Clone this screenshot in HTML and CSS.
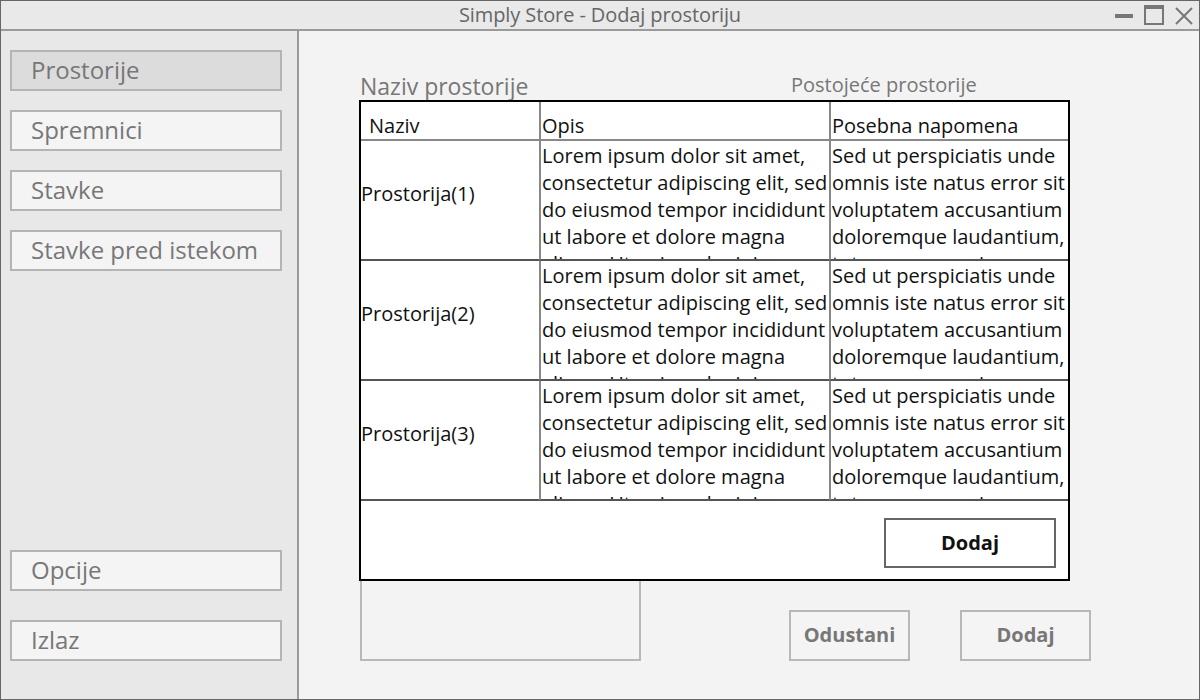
FILE: index.html
```html
<!DOCTYPE html>
<html lang="hr">
<head>
<meta charset="utf-8">
<title>Simply Store - Dodaj prostoriju</title>
<link rel="stylesheet" href="styles.css">
</head>
<body>
<div class="window">
  <header class="titlebar">
    <span class="title">Simply Store - Dodaj prostoriju</span>
    <div class="controls">
      <span class="ctl-min"></span>
      <span class="ctl-max"></span>
      <svg class="ctl-close" width="18" height="18" viewBox="0 0 18 18"><path d="M1 1 L17 17 M17 1 L1 17" stroke="#777" stroke-width="2" fill="none"/></svg>
    </div>
  </header>
  <div class="body">
    <aside class="sidebar">
      <nav class="nav-top">
        <button class="nav-btn active">Prostorije</button>
        <button class="nav-btn">Spremnici</button>
        <button class="nav-btn">Stavke</button>
        <button class="nav-btn">Stavke pred istekom</button>
      </nav>
      <nav class="nav-bottom">
        <button class="nav-btn">Opcije</button>
        <button class="nav-btn">Izlaz</button>
      </nav>
    </aside>
    <main class="main">
      <section class="col-left">
        <label class="field-label">Naziv prostorije</label>
        <div class="textbox"></div>
      </section>
      <section class="col-right">
        <div class="list-label">Postojeće prostorije</div>
        <div class="actions">
          <button class="act-btn cancel">Odustani</button>
          <button class="act-btn add">Dodaj</button>
        </div>
      </section>

      <div class="popup">
        <div class="grid">
          <div class="cell head c1">Naziv</div>
          <div class="cell head c2">Opis</div>
          <div class="cell head c3">Posebna napomena</div>

          <div class="cell name c1">Prostorija(1)</div>
          <div class="cell txt c2">Lorem ipsum dolor sit amet,<br>consectetur adipiscing elit, sed<br>do eiusmod tempor incididunt<br>ut labore et dolore magna<br>aliqua. Ut enim ad minim</div>
          <div class="cell txt c3">Sed ut perspiciatis unde<br>omnis iste natus error sit<br>voluptatem accusantium<br>doloremque laudantium,<br>totam rem aperiam</div>

          <div class="cell name c1">Prostorija(2)</div>
          <div class="cell txt c2">Lorem ipsum dolor sit amet,<br>consectetur adipiscing elit, sed<br>do eiusmod tempor incididunt<br>ut labore et dolore magna<br>aliqua. Ut enim ad minim</div>
          <div class="cell txt c3">Sed ut perspiciatis unde<br>omnis iste natus error sit<br>voluptatem accusantium<br>doloremque laudantium,<br>totam rem aperiam</div>

          <div class="cell name c1">Prostorija(3)</div>
          <div class="cell txt c2">Lorem ipsum dolor sit amet,<br>consectetur adipiscing elit, sed<br>do eiusmod tempor incididunt<br>ut labore et dolore magna<br>aliqua. Ut enim ad minim</div>
          <div class="cell txt c3">Sed ut perspiciatis unde<br>omnis iste natus error sit<br>voluptatem accusantium<br>doloremque laudantium,<br>totam rem aperiam</div>
        </div>
        <div class="popup-foot">
          <button class="popup-btn">Dodaj</button>
        </div>
      </div>
    </main>
  </div>
</div>
</body>
</html>
```

FILE: styles.css
```css
* { box-sizing: border-box; }
html, body { margin: 0; padding: 0; }
body {
  font-family: "Open Sans", "Noto Sans", sans-serif;
  width: 1200px;
  height: 700px;
  overflow: hidden;
}
button { font-family: inherit; cursor: pointer; }

.window {
  width: 1200px;
  height: 700px;
  border: 1px solid #666;
  display: flex;
  flex-direction: column;
  background: #f3f3f3;
}

.titlebar {
  height: 30px;
  flex: none;
  background: #e9e9e9;
  border-bottom: 2px solid #9a9a9a;
  position: relative;
  display: flex;
  align-items: center;
  justify-content: center;
}
.title {
  font-size: 20px;
  color: #666;
  line-height: 28px;
  letter-spacing: -0.1px;
}
.controls {
  position: absolute;
  right: 6px;
  top: 4px;
  display: flex;
  align-items: center;
  gap: 11px;
}
.ctl-min {
  width: 18px;
  height: 4px;
  background: #777;
  margin-top: 2px;
}
.ctl-max {
  width: 20px;
  height: 20px;
  border: 2px solid #777;
  border-top-width: 4px;
}
.ctl-close { margin-top: 2px; }

.body {
  flex: 1;
  display: flex;
  min-height: 0;
}

.sidebar {
  width: 298px;
  flex: none;
  background: #e8e8e8;
  border-right: 2px solid #9a9a9a;
  padding: 19px 17px 38px 9px;
  display: flex;
  flex-direction: column;
  justify-content: space-between;
}
.nav-top, .nav-bottom {
  display: flex;
  flex-direction: column;
}
.nav-top { gap: 19px; }
.nav-bottom { gap: 29px; }
.nav-btn {
  height: 41px;
  width: 272px;
  background: #f4f4f4;
  border: 2px solid #b4b4b4;
  text-align: left;
  padding: 0 0 2px 19px;
  font-size: 24px;
  line-height: 30px;
  color: #777;
}
.nav-btn.active { background: #dcdcdc; }

.main {
  flex: 1;
  position: relative;
  display: flex;
  padding: 41px 0 38px 61px;
}
.col-left {
  width: 281px;
  display: flex;
  flex-direction: column;
}
.field-label {
  font-size: 23px;
  color: #777;
  line-height: 29px;
  height: 29px;
}
.textbox {
  flex: 1;
  border: 2px solid #b8b8b8;
  border-top: none;
}
.col-right {
  flex: 1;
  padding-left: 148px;
  display: flex;
  flex-direction: column;
  justify-content: space-between;
}
.list-label {
  font-size: 20px;
  color: #777;
  line-height: 26px;
  padding-left: 2px;
}
.actions {
  display: flex;
  gap: 50px;
}
.act-btn {
  height: 51px;
  background: #f4f4f4;
  border: 2px solid #b8b8b8;
  font-size: 20px;
  font-weight: bold;
  color: #777;
  padding: 0 0 2px;
}
.act-btn.cancel { width: 121px; }
.act-btn.add { width: 131px; }

.popup {
  position: absolute;
  left: 60px;
  top: 69px;
  width: 711px;
  height: 481px;
  background: #fff;
  border: 2px solid #000;
  display: flex;
  flex-direction: column;
}
.grid {
  display: grid;
  grid-template-columns: 178px 290px 1fr;
  grid-template-rows: 39px 120px 120px 120px;
}
.cell {
  overflow: hidden;
  color: #111;
  font-size: 20px;
  line-height: 27px;
  white-space: nowrap;
}
.cell.c2, .cell.c3 { border-left: 2px solid #888; padding-left: 1px; }
.head {
  border-bottom: 2px solid #888;
  padding-top: 10px;
}
.head.c1 { padding-left: 8px; }
.name {
  display: flex;
  align-items: center;
  padding: 0 0 14px 0;
  border-bottom: 2px solid #555;
}
.txt {
  padding-top: 1px;
  border-bottom: 2px solid #555;
}
.popup-foot {
  flex: 1;
  display: flex;
  justify-content: flex-end;
  align-items: center;
  padding: 6px 12px 0 0;
}
.popup-btn {
  width: 172px;
  height: 50px;
  background: #fff;
  border: 2px solid #666;
  font-size: 20px;
  font-weight: bold;
  color: #111;
  padding: 0 0 2px;
}
```
